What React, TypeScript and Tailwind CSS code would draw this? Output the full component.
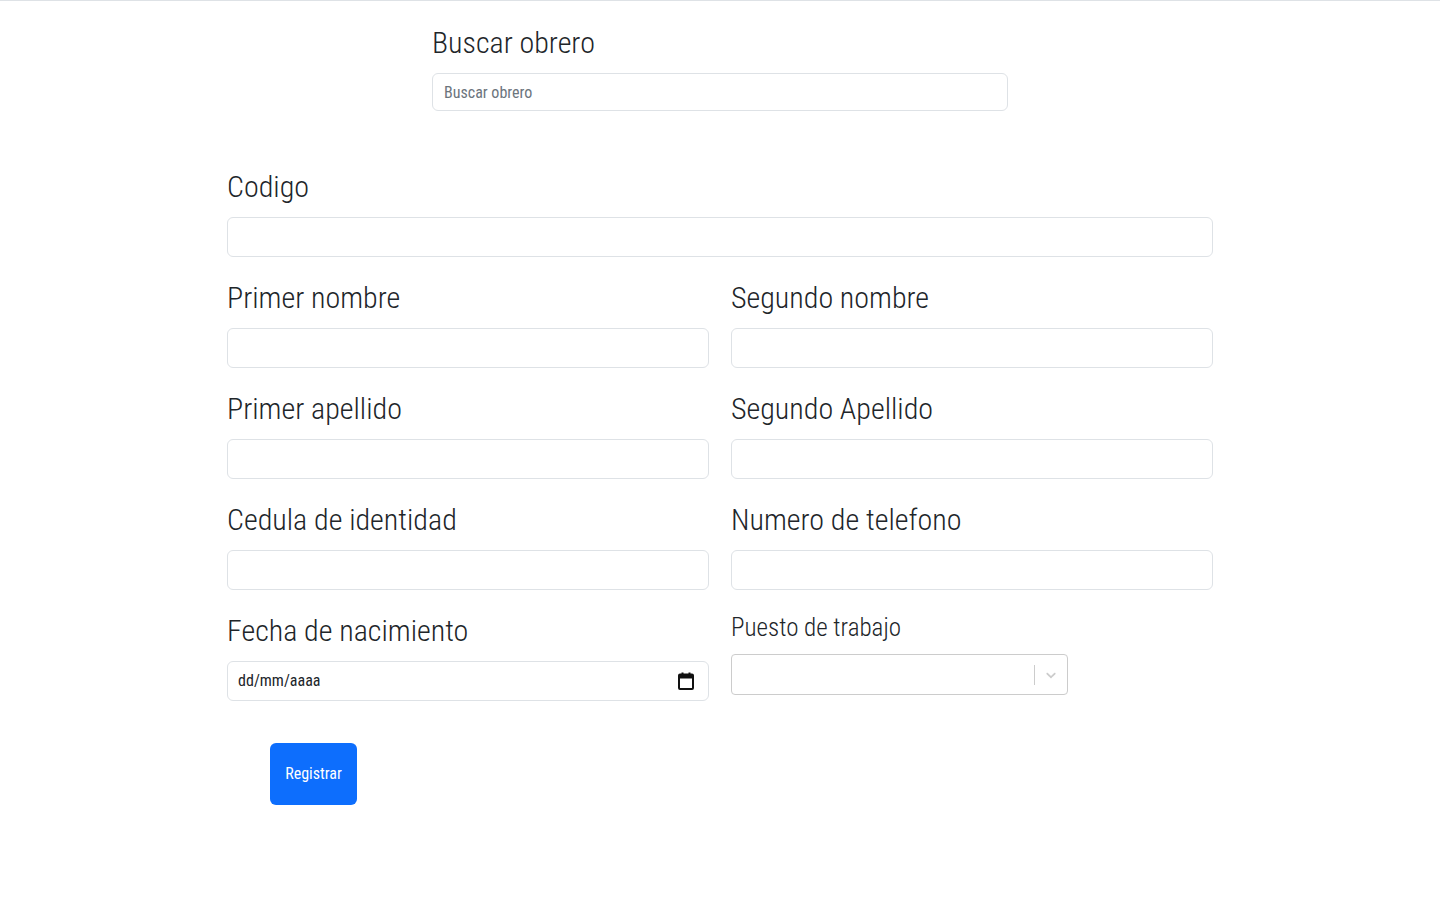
const fields: [string, string][] = [
  ["Primer nombre", "Segundo nombre"],
  ["Primer apellido", "Segundo Apellido"],
  ["Cedula de identidad", "Numero de telefono"],
];

function Label({ children }: { children: string }) {
  return (
    <label className="block h-[38px] text-[30px] leading-[38px] font-light text-[#212529] mb-[11px]">
      {children}
    </label>
  );
}

function TextInput() {
  return (
    <input
      type="text"
      className="block w-full h-[40px] rounded-[6px] border border-[#dee2e6] bg-white px-3 text-base outline-none"
    />
  );
}

export default function App() {
  return (
    <div className="min-h-screen bg-white border-t border-[#dee2e6] font-['Roboto_Condensed','Open_Sans',sans-serif]">
      <div className="w-[576px] ml-[432px] pt-[23px]">
        <Label>Buscar obrero</Label>
        <input
          type="text"
          placeholder="Buscar obrero"
          className="block w-full h-[38px] rounded-[6px] border border-[#dee2e6] bg-white px-[11px] text-base text-[#212529] outline-none placeholder:text-[#6c757d]"
        />
      </div>

      <form className="w-[986px] ml-[227px] mt-[57px]">
        <Label>Codigo</Label>
        <TextInput />

        {fields.map(([a, b]) => (
          <div key={a} className="grid grid-cols-2 gap-x-[22px] mt-[22px]">
            <div>
              <Label>{a}</Label>
              <TextInput />
            </div>
            <div>
              <Label>{b}</Label>
              <TextInput />
            </div>
          </div>
        ))}

        <div className="grid grid-cols-2 gap-x-[22px] mt-[22px]">
          <div>
            <Label>Fecha de nacimiento</Label>
            <div className="flex items-center justify-between h-[40px] rounded-[6px] border border-[#dee2e6] bg-white pl-[10px] pr-[14px] text-base text-[#212529]">
              <span>dd/mm/aaaa</span>
              <svg width="16" height="18" viewBox="0 0 16 18" fill="none">
                <rect x="1" y="2.5" width="14" height="14.5" rx="1" stroke="#111" strokeWidth="2" />
                <rect x="1" y="2.5" width="14" height="4" fill="#111" />
                <rect x="3.5" y="0.5" width="2" height="3" fill="#111" />
                <rect x="10.5" y="0.5" width="2" height="3" fill="#111" />
              </svg>
            </div>
          </div>
          <div>
            <label className="block h-[30px] text-[25px] leading-[32px] font-light text-[#212529] mb-[12px]">
              Puesto de trabajo
            </label>
            <div className="flex items-center w-[337px] h-[41px] rounded-[4px] border border-[#cccccc] bg-white">
              <div className="flex-1" />
              <span className="w-px h-[20px] bg-[#cccccc]" />
              <div className="px-[8px] text-[#cccccc]">
                <svg width="16" height="16" viewBox="0 0 20 20" fill="currentColor">
                  <path d="M4.516 7.548c0.436-0.446 1.043-0.481 1.576 0l3.908 3.747 3.908-3.747c0.533-0.481 1.141-0.446 1.574 0 0.436 0.445 0.408 1.197 0 1.615-0.406 0.418-4.695 4.502-4.695 4.502-0.217 0.223-0.502 0.335-0.787 0.335s-0.57-0.112-0.789-0.335c0 0-4.287-4.084-4.695-4.502s-0.436-1.17 0-1.615z" />
                </svg>
              </div>
            </div>
          </div>
        </div>

        <button
          type="button"
          className="mt-[42px] ml-[43px] w-[87px] h-[62px] rounded-[6px] bg-[#0d6efd] text-white text-base"
        >
          Registrar
        </button>
      </form>
    </div>
  );
}
